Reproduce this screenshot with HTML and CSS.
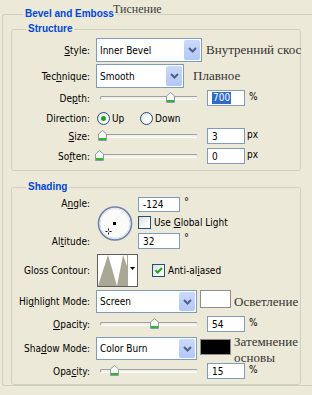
FILE: index.html
```html
<!DOCTYPE html>
<html>

<head>
  <meta charset="UTF-8" />
  <title>Тиснение</title>
  <link rel="stylesheet" href="styles.css">
</head>

<body>
  <span class="note note-title">Тиснение</span>

  <fieldset class="box box-outer">
    <legend>Bevel and Emboss</legend>

    <!-- Structure -->
    <fieldset class="box box-inner box-structure">
      <legend>Structure</legend>

      <div class="row row-combo">
        <label class="lbl"><u>S</u>tyle:</label>
        <div class="combo combo-style">
          <span class="combo-text">Inner Bevel</span>
          <span class="combo-btn"><svg width="9" height="6" viewBox="0 0 9 6"><path d="M1 1l3.5 3.5L8 1" fill="none" stroke="#4D6185" stroke-width="2"/></svg></span>
        </div>
        <span class="note note-style">Внутренний скос</span>
      </div>

      <div class="row row-combo">
        <label class="lbl">Tec<u>h</u>nique:</label>
        <div class="combo combo-tech">
          <span class="combo-text">Smooth</span>
          <span class="combo-btn"><svg width="9" height="6" viewBox="0 0 9 6"><path d="M1 1l3.5 3.5L8 1" fill="none" stroke="#4D6185" stroke-width="2"/></svg></span>
        </div>
        <span class="note note-tech">Плавное</span>
      </div>

      <div class="row row-field">
        <label class="lbl">De<u>p</u>th:</label>
        <div class="slider">
          <div class="track"></div>
          <span class="thumb" style="left: 70px"><svg width="9" height="11" viewBox="0 0 9 11"><path d="M.5 10.5V4L4.5.5 8.5 4v6.5z" fill="#F7F7F3" stroke="#8C9AA6"/><rect x="1" y="8" width="7" height="2" fill="#2FB52F"/></svg></span>
        </div>
        <div class="field"><span class="sel">700</span></div>
        <span class="unit">%</span>
      </div>

      <div class="row row-field row-dir">
        <label class="lbl">Direction:</label>
        <span class="opt opt-up"><span class="radio on"></span><span>Up</span></span>
        <span class="opt"><span class="radio"></span><span>Down</span></span>
      </div>

      <div class="row row-field row-size">
        <label class="lbl"><u>S</u>ize:</label>
        <div class="slider">
          <div class="track"></div>
          <span class="thumb" style="left: 2px"><svg width="9" height="11" viewBox="0 0 9 11"><path d="M.5 10.5V4L4.5.5 8.5 4v6.5z" fill="#F7F7F3" stroke="#8C9AA6"/><rect x="1" y="8" width="7" height="2" fill="#2FB52F"/></svg></span>
        </div>
        <div class="field">3</div>
        <span class="unit unit-px">px</span>
      </div>

      <div class="row row-field row-soften">
        <label class="lbl">So<u>f</u>ten:</label>
        <div class="slider">
          <div class="track"></div>
          <span class="thumb" style="left: -1px"><svg width="9" height="11" viewBox="0 0 9 11"><path d="M.5 10.5V4L4.5.5 8.5 4v6.5z" fill="#F7F7F3" stroke="#8C9AA6"/><rect x="1" y="8" width="7" height="2" fill="#2FB52F"/></svg></span>
        </div>
        <div class="field">0</div>
        <span class="unit unit-px">px</span>
      </div>
    </fieldset>

    <!-- Shading -->
    <fieldset class="box box-inner box-shading">
      <legend>Shading</legend>

      <div class="light">
        <label class="lbl lbl-angle">A<u>n</u>gle:</label>
        <svg class="dial" width="36" height="37" viewBox="0 0 36 37">
          <circle cx="18" cy="18.5" r="16.5" fill="#FAFAF8" stroke="#6F83A9" stroke-width="1.6"/>
          <circle cx="18" cy="18.5" r="15" fill="none" stroke="#D9DFEA" stroke-width="1"/>
          <rect x="16" y="17" width="3" height="3" fill="#000"/>
          <path d="M11.5 23.5v2M11.5 27.5v2M8.5 26.5h2M12.5 26.5h2" stroke="#000" stroke-width="1"/>
        </svg>
        <div class="cell cell-angle">
          <div class="field field-wide">-124</div>
          <span class="deg">°</span>
        </div>
        <div class="cell cell-global">
          <span class="check"></span>
          <span>Use <u>G</u>lobal Light</span>
        </div>
        <label class="lbl lbl-alt">Al<u>t</u>itude:</label>
        <div class="cell cell-alt">
          <div class="field field-wide">32</div>
          <span class="deg">°</span>
        </div>
      </div>

      <div class="row row-contour">
        <label class="lbl">Gloss Contour:</label>
        <div class="contour">
          <svg class="plot" width="29" height="31" viewBox="0 0 29 31">
            <rect width="29" height="31" fill="#fff"/>
            <path d="M0 31L10 0l9 31L25 0l4 11v20z" fill="#A9A795"/>
          </svg>
          <span class="contour-btn"><svg width="5" height="3" viewBox="0 0 5 3"><path d="M0 0h5L2.5 3z" fill="#000"/></svg></span>
        </div>
        <span class="opt opt-aa">
          <span class="check on"><svg width="11" height="11" viewBox="0 0 11 11"><path d="M2.5 5.2l2.2 2.3L9 3" fill="none" stroke="#21A121" stroke-width="2"/></svg></span>
          <span>Anti-al<u>i</u>ased</span>
        </span>
      </div>

      <div class="row row-mode row-high">
        <label class="lbl">Hi<u>g</u>hlight Mode:</label>
        <div class="combo combo-mode">
          <span class="combo-text">Screen</span>
          <span class="combo-btn"><svg width="9" height="6" viewBox="0 0 9 6"><path d="M1 1l3.5 3.5L8 1" fill="none" stroke="#4D6185" stroke-width="2"/></svg></span>
        </div>
        <span class="swatch swatch-white"></span>
        <span class="note">Осветление</span>
      </div>

      <div class="row row-field row-opacity">
        <label class="lbl"><u>O</u>pacity:</label>
        <div class="slider">
          <div class="track"></div>
          <span class="thumb" style="left: 54px"><svg width="9" height="11" viewBox="0 0 9 11"><path d="M.5 10.5V4L4.5.5 8.5 4v6.5z" fill="#F7F7F3" stroke="#8C9AA6"/><rect x="1" y="8" width="7" height="2" fill="#2FB52F"/></svg></span>
        </div>
        <div class="field">54</div>
        <span class="unit">%</span>
      </div>

      <div class="row row-mode row-shadow">
        <label class="lbl">Sha<u>d</u>ow Mode:</label>
        <div class="combo combo-mode">
          <span class="combo-text">Color Burn</span>
          <span class="combo-btn"><svg width="9" height="6" viewBox="0 0 9 6"><path d="M1 1l3.5 3.5L8 1" fill="none" stroke="#4D6185" stroke-width="2"/></svg></span>
        </div>
        <span class="swatch swatch-black"></span>
        <span class="note note-shadow">Затемнение основы</span>
      </div>

      <div class="row row-field row-opacity2">
        <label class="lbl">Opa<u>c</u>ity:</label>
        <div class="slider">
          <div class="track"></div>
          <span class="thumb" style="left: 14px"><svg width="9" height="11" viewBox="0 0 9 11"><path d="M.5 10.5V4L4.5.5 8.5 4v6.5z" fill="#F7F7F3" stroke="#8C9AA6"/><rect x="1" y="8" width="7" height="2" fill="#2FB52F"/></svg></span>
        </div>
        <div class="field">15</div>
        <span class="unit">%</span>
      </div>
    </fieldset>
  </fieldset>
</body>

</html>
```

FILE: styles.css
```css
* {
  box-sizing: border-box;
}

html,
body {
  margin: 0;
  padding: 0;
  overflow: hidden;
}

body {
  position: relative;
  width: 312px;
  height: 395px;
  background-color: #ECE9D8;
  color: #000;
  font-family: "DejaVu Sans Condensed", "DejaVu Sans", sans-serif;
  font-stretch: condensed;
  font-size: 10px;
}

u {
  text-decoration-thickness: 1px;
  text-underline-offset: 1px;
}

/* group boxes */
.box {
  margin: 0;
  padding: 0;
  min-width: 0;
  border: 1px solid #D0D0BF;
  border-radius: 3px;
}

.box legend {
  margin-left: 14px;
  padding: 0 2px;
  line-height: 12px;
  color: #0046D5;
  font-family: "Liberation Sans", sans-serif;
  font-stretch: normal;
  font-size: 10px;
  font-weight: bold;
}

.box-outer {
  margin: 8px 0 0 2px;
  padding: 3px 0 0 8px;
  border-right: 0;
  border-radius: 3px 0 0 3px;
}

.box-outer > legend {
  margin-left: 12px;
}

.box-inner {
  width: 290px;
}

.box-structure {
  padding: 3px 0 6px 0;
}

.box-shading {
  margin-top: 10px;
  padding: 4px 0 5px 0;
}

/* annotations */
.note {
  color: #333;
  font-family: "Liberation Serif", serif;
  font-stretch: normal;
  font-size: 13px;
  line-height: 16px;
  white-space: nowrap;
}

.note-title {
  position: absolute;
  top: 1px;
  left: 113px;
  font-size: 12px;
  color: #3a3a3a;
}

.note-style {
  margin-left: 4px;
}

.note-tech {
  margin-left: 9px;
}

.note-shadow {
  align-self: flex-start;
  margin-top: -3px;
  width: 66px;
  white-space: normal;
}

/* rows */
.row {
  display: flex;
  align-items: center;
}

.row-combo {
  height: 24px;
  margin-bottom: 2px;
}

.row-field {
  height: 16px;
}

.row-dir {
  margin-top: 4px;
}

.row-size {
  margin-top: 2px;
}

.row-soften {
  margin-top: 4px;
}

.lbl {
  flex: none;
  width: 78px;
  margin-right: 6px;
  text-align: right;
  white-space: nowrap;
}

/* combo boxes */
.combo {
  flex: none;
  display: flex;
  align-items: stretch;
  height: 24px;
  border: 1px solid #7F9DB9;
  background: #fff;
}

.combo-style {
  width: 106px;
}

.combo-tech {
  width: 88px;
}

.combo-mode {
  width: 101px;
  height: 23px;
}

.combo-text {
  flex: 1;
  display: flex;
  align-items: center;
  padding-left: 3px;
}

.combo-btn {
  flex: none;
  display: flex;
  align-items: center;
  justify-content: center;
  width: 16px;
  margin: 1px;
  border-radius: 2px;
  background: linear-gradient(#CAD9FC, #B3C7F5);
}

/* sliders */
.slider {
  flex: none;
  position: relative;
  width: 105px;
  height: 16px;
  margin-right: 6px;
  padding: 6px 3px 0 4px;
}

.track {
  height: 4px;
  border: 1px solid;
  border-color: #A09F98 #E2E0D6 #fff #A09F98;
  border-radius: 2px;
  background: #F1F0EA;
}

.thumb {
  position: absolute;
  top: 2px;
  display: block;
  width: 9px;
  height: 11px;
  line-height: 0;
}

/* text fields */
.field {
  flex: none;
  display: flex;
  align-items: center;
  width: 38px;
  height: 16px;
  padding-left: 4px;
  border: 1px solid #7F9DB9;
  background: #fff;
}

.field-wide {
  width: 42px;
}

.sel {
  padding: 0 1px;
  line-height: 12px;
  background: #316AC5;
  color: #fff;
}

.unit {
  margin-left: 4px;
  margin-top: -3px;
}

.unit-px {
  margin-left: 2px;
}

.deg {
  align-self: flex-start;
  margin-left: 4px;
  margin-top: -2px;
  font-size: 11px;
}

/* radios and checks */
.opt {
  display: flex;
  align-items: center;
  gap: 2px;
}

.opt-up {
  width: 43px;
  margin-left: 1px;
}

.radio {
  flex: none;
  display: flex;
  align-items: center;
  justify-content: center;
  width: 13px;
  height: 13px;
  border: 1px solid #1C5180;
  border-radius: 50%;
  background: radial-gradient(circle at 65% 65%, #fff 20%, #DCDAD0);
}

.radio.on::after {
  content: "";
  width: 5px;
  height: 5px;
  border-radius: 50%;
  background: #21A121;
}

.check {
  flex: none;
  display: inline-flex;
  align-items: center;
  justify-content: center;
  width: 13px;
  height: 13px;
  border: 1px solid #1C5180;
  background: linear-gradient(135deg, #DCDCD6, #fff 80%);
}

/* light block */
.light {
  display: grid;
  grid-template-columns: 84px 42px auto;
  grid-template-rows: 15px 13px 16px;
  row-gap: 4px;
}

.lbl-angle {
  grid-column: 1;
  grid-row: 1;
  align-self: center;
  margin-top: -2px;
}

.lbl-alt {
  grid-column: 1;
  grid-row: 3;
  align-self: center;
}

.dial {
  grid-column: 2;
  grid-row: 1 / 4;
  align-self: center;
  margin-left: 1px;
}

.cell {
  display: flex;
  align-items: center;
}

.cell-angle {
  grid-column: 3;
  grid-row: 1;
}

.cell-angle .field {
  height: 15px;
}

.cell-global {
  grid-column: 3;
  grid-row: 2;
  gap: 3px;
}

.cell-alt {
  grid-column: 3;
  grid-row: 3;
}

/* contour */
.row-contour {
  height: 33px;
  margin-top: 5px;
}

.contour {
  flex: none;
  display: flex;
  width: 41px;
  height: 33px;
  margin-left: 1px;
  border: 1px solid #5E5E5E;
  background: #fff;
}

.plot {
  display: block;
  flex: none;
}

.contour-btn {
  flex: 1;
  display: flex;
  align-items: center;
  justify-content: center;
  padding-bottom: 4px;
  border-left: 1px solid #ACA899;
}

.opt-aa {
  margin-left: 14px;
  gap: 3px;
}

/* modes */
.row-mode {
  height: 23px;
}

.row-high {
  margin-top: 3px;
}

.row-shadow {
  margin-top: 5px;
}

.row-opacity,
.row-opacity2 {
  margin-top: 3px;
}

.swatch {
  flex: none;
  align-self: flex-start;
  width: 31px;
  height: 18px;
  margin: 0 3px;
  border: 1px solid #8E8E8E;
}

.swatch-white {
  background: #fff;
}

.swatch-black {
  height: 16px;
  margin-top: 2px;
  background: #000;
}
```
